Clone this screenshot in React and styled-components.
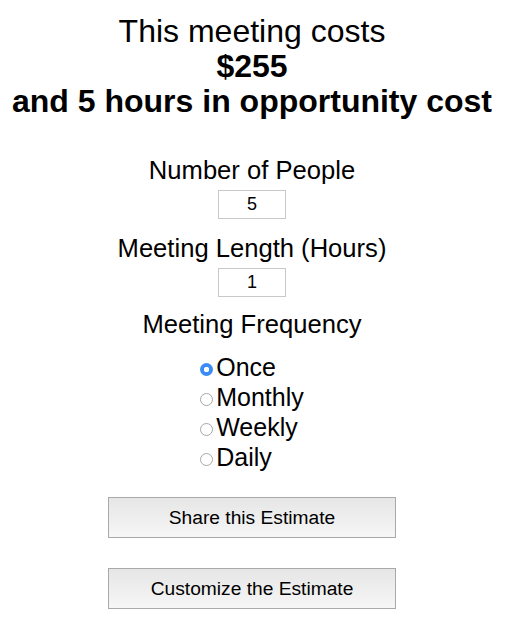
import { useState } from "react";
import styled, { createGlobalStyle } from "styled-components";

const GlobalStyle = createGlobalStyle`
  body {
    margin: 0;
    background: #ffffff;
    font-family: "Liberation Sans", Arial, Helvetica, sans-serif;
    color: #000000;
  }
`;

const Page = styled.div`
  display: flex;
  flex-direction: column;
  align-items: center;
  text-align: center;
  padding: 14px 4px 0 0;
`;

const Headline = styled.h1`
  margin: 0;
  font-size: 32px;
  line-height: 35px;
  font-weight: normal;
`;

const Strong = styled.strong`
  display: block;
  font-weight: bold;
`;

const Field = styled.div`
  display: flex;
  flex-direction: column;
  align-items: center;
  margin-top: ${(p) => p.$top}px;
`;

const Label = styled.label`
  font-size: 25.6px;
  line-height: 29px;
`;

const NumberInput = styled.input`
  box-sizing: border-box;
  width: 68px;
  height: 29px;
  margin-top: 5px;
  border: 1px solid #c8c8c8;
  border-radius: 0;
  padding: 0;
  text-align: center;
  font-family: "Liberation Sans", Arial, sans-serif;
  font-size: 18px;
  color: #000;
  outline: none;
`;

const Options = styled.div`
  margin-top: 13px;
  display: inline-block;
  text-align: left;
`;

const Option = styled.label`
  display: block;
  font-size: 25px;
  line-height: 30px;
  cursor: pointer;
`;

const Radio = styled.input`
  appearance: none;
  display: inline-block;
  box-sizing: border-box;
  width: 13px;
  height: 13px;
  margin: 0 3px 0 0;
  border-radius: 50%;
  border: 1px solid #a8a8a8;
  background: #ffffff;
  &:checked {
    border: none;
    background: radial-gradient(circle, #ffffff 0 2.5px, #3b8df5 3px);
  }
`;

const Actions = styled.div`
  display: flex;
  flex-direction: column;
  gap: 30px;
  margin-top: 25px;
`;

const Button = styled.button`
  width: 288px;
  height: 41px;
  border: 1px solid #a9a9a9;
  border-radius: 0;
  background: linear-gradient(#e6e6e6, #f6f6f6);
  font-family: "Liberation Sans", Arial, sans-serif;
  font-size: 19.2px;
  color: #000;
  cursor: pointer;
`;

const frequencies = ["Once", "Monthly", "Weekly", "Daily"];

export default function App() {
  const [people, setPeople] = useState("5");
  const [hours, setHours] = useState("1");
  const [freq, setFreq] = useState("Once");

  const cost = Math.round(Number(people) * Number(hours) * 51);
  const opportunity = Number(people) * Number(hours);

  return (
    <>
      <GlobalStyle />
      <Page>
        <Headline>
          This meeting costs
          <Strong>${cost}</Strong>
          <Strong>and {opportunity} hours in opportunity cost</Strong>
        </Headline>

        <Field $top={37}>
          <Label htmlFor="people">Number of People</Label>
          <NumberInput
            id="people"
            value={people}
            onChange={(e) => setPeople(e.target.value)}
          />
        </Field>

        <Field $top={15}>
          <Label htmlFor="hours">Meeting Length (Hours)</Label>
          <NumberInput
            id="hours"
            value={hours}
            onChange={(e) => setHours(e.target.value)}
          />
        </Field>

        <Field $top={13}>
          <Label>Meeting Frequency</Label>
          <Options>
            {frequencies.map((f) => (
              <Option key={f}>
                <Radio
                  type="radio"
                  name="frequency"
                  checked={freq === f}
                  onChange={() => setFreq(f)}
                />
                {f}
              </Option>
            ))}
          </Options>
        </Field>

        <Actions>
          <Button>Share this Estimate</Button>
          <Button>Customize the Estimate</Button>
        </Actions>
      </Page>
    </>
  );
}
